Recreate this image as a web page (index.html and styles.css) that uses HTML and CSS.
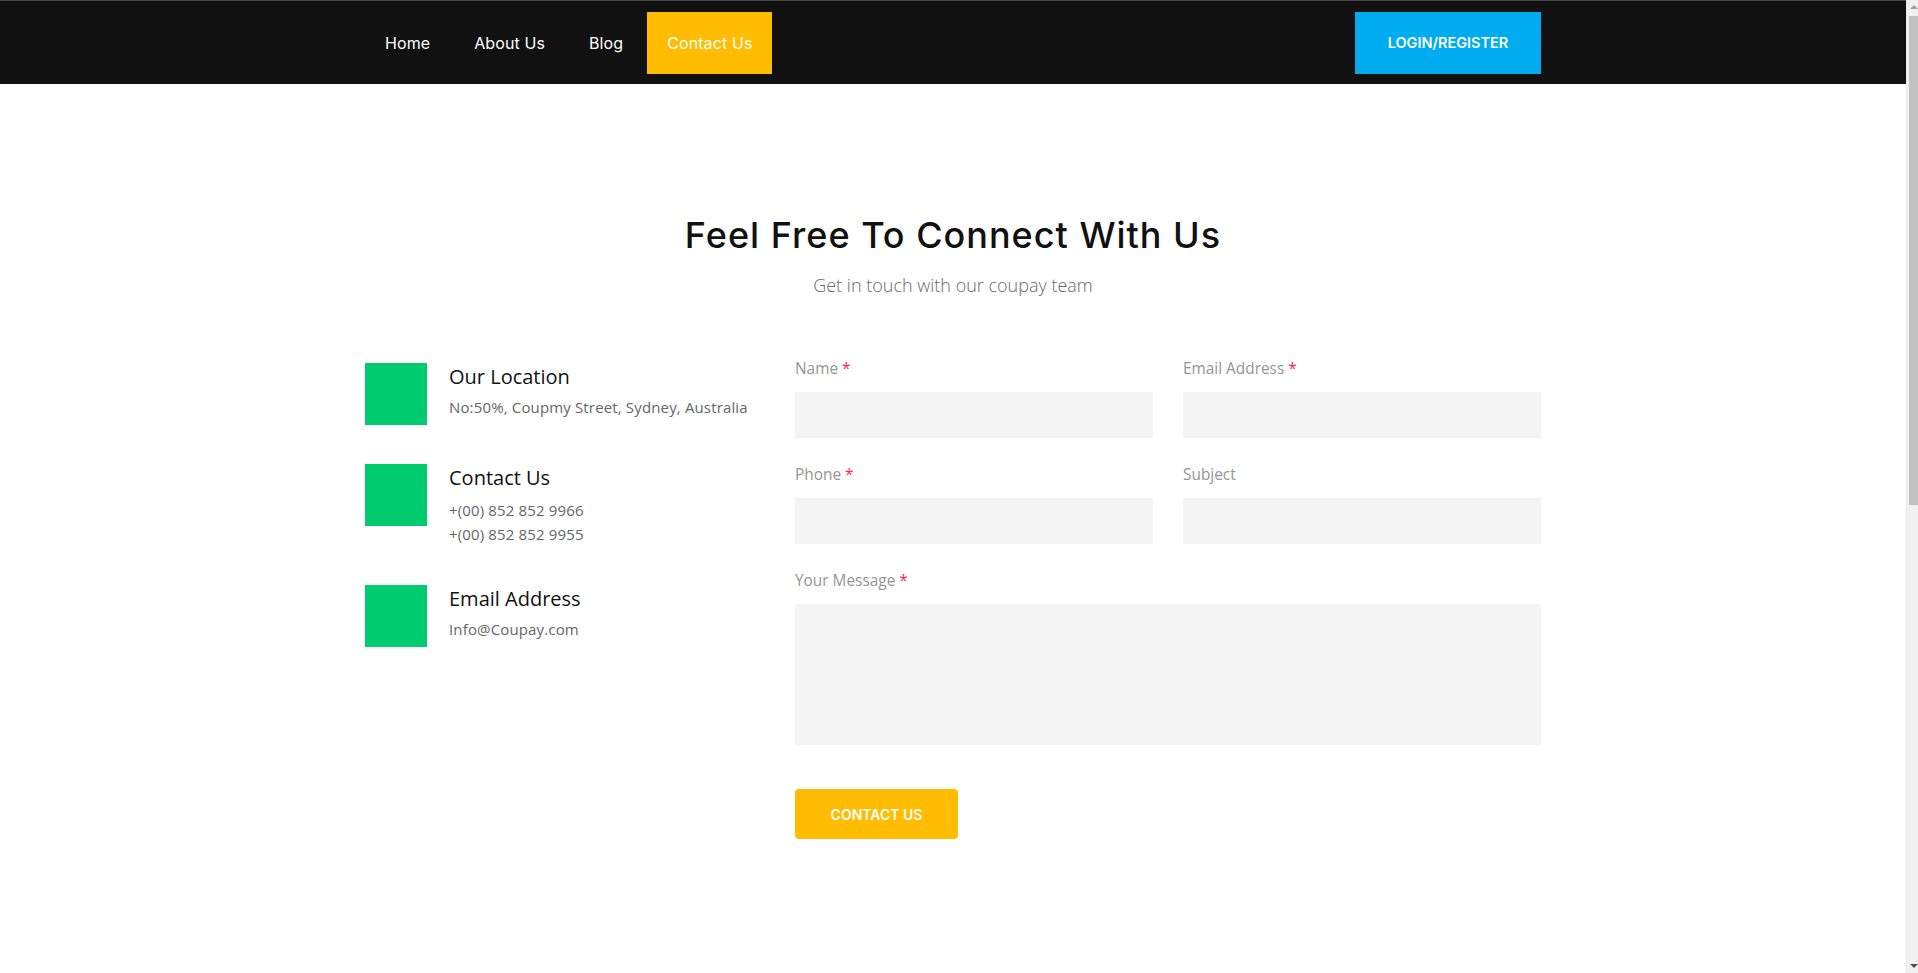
FILE: index.html
```html
<!DOCTYPE html>
<html lang="en">
<head>
<meta charset="utf-8">
<title>Contact Us - Coupay</title>
<link rel="stylesheet" href="styles.css">
</head>
<body>
<header class="topbar">
  <div class="container topbar-inner">
    <nav class="nav">
      <a class="nav-link" href="#">Home</a>
      <a class="nav-link" href="#">About Us</a>
      <a class="nav-link" href="#">Blog</a>
      <a class="nav-link active" href="#">Contact Us</a>
    </nav>
    <a class="login-btn" href="#">LOGIN/REGISTER</a>
  </div>
</header>

<main class="contact">
  <div class="container">
    <h1 class="contact-title">Feel Free To Connect With Us</h1>
    <p class="contact-sub">Get in touch with our coupay team</p>

    <div class="contact-grid">
      <div class="info-list">
        <div class="info-item">
          <div class="info-icon"></div>
          <div class="info-body">
            <h3 class="info-title">Our Location</h3>
            <p class="info-text">No:50%, Coupmy Street, Sydney, Australia</p>
          </div>
        </div>
        <div class="info-item">
          <div class="info-icon"></div>
          <div class="info-body">
            <h3 class="info-title">Contact Us</h3>
            <p class="info-text info-text-multi">+(00) 852 852 9966<br>+(00) 852 852 9955</p>
          </div>
        </div>
        <div class="info-item">
          <div class="info-icon"></div>
          <div class="info-body">
            <h3 class="info-title">Email Address</h3>
            <p class="info-text">Info@Coupay.com</p>
          </div>
        </div>
      </div>

      <form class="contact-form">
        <div class="field">
          <label class="field-label">Name <span class="req">*</span></label>
          <input class="field-input" type="text">
        </div>
        <div class="field">
          <label class="field-label">Email Address <span class="req">*</span></label>
          <input class="field-input" type="email">
        </div>
        <div class="field">
          <label class="field-label">Phone <span class="req">*</span></label>
          <input class="field-input" type="text">
        </div>
        <div class="field">
          <label class="field-label">Subject</label>
          <input class="field-input" type="text">
        </div>
        <div class="field field-wide">
          <label class="field-label">Your Message <span class="req">*</span></label>
          <textarea class="field-input field-textarea"></textarea>
        </div>
        <div class="field-wide">
          <button class="submit-btn" type="button">CONTACT US</button>
        </div>
      </form>
    </div>
  </div>
</main>

<div class="scrollbar" aria-hidden="true">
  <span class="sb-arrow sb-up"></span>
  <span class="sb-thumb"></span>
  <span class="sb-arrow sb-down"></span>
</div>
</body>
</html>
```

FILE: styles.css
```css
* {
  box-sizing: border-box;
}

html, body {
  margin: 0;
  padding: 0;
}

body {
  font-family: "Open Sans", "Noto Sans", sans-serif;
  color: #111;
  background: #fff;
  padding-right: 12px;
}

.container {
  width: 1176px;
  margin: 0 auto;
}

/* Header */
.topbar {
  background: #111111;
  border-top: 1px solid #454545;
  margin-right: -12px;
  padding-right: 12px;
}

.topbar-inner {
  height: 83px;
  display: flex;
  align-items: center;
  justify-content: space-between;
}

.nav {
  display: flex;
  align-items: center;
  gap: 4px;
}

.nav-link {
  display: flex;
  align-items: center;
  height: 62px;
  padding: 0 20px;
  font-family: Inter, "Liberation Sans", sans-serif;
  font-weight: 400;
  font-size: 16px;
  letter-spacing: 0.1px;
  color: #fff;
  text-decoration: none;
}

.nav-link.active {
  background: #ffbc00;
}

.login-btn {
  display: flex;
  align-items: center;
  justify-content: center;
  width: 186px;
  height: 62px;
  background: #00acf0;
  color: #fff;
  font-family: Inter, "Liberation Sans", sans-serif;
  font-weight: 600;
  font-size: 14.5px;
  text-decoration: none;
}

/* Contact section */
.contact {
  padding-top: 130px;
  min-height: 1900px;
}

.contact-title {
  margin: 0;
  text-align: center;
  font-family: Inter, "Liberation Sans", sans-serif;
  font-weight: 500;
  font-size: 36px;
  letter-spacing: 1px;
  line-height: 43px;
  color: #111;
}

.contact-sub {
  margin: 15px 0 0;
  text-align: center;
  font-weight: 300;
  font-size: 18px;
  line-height: 27px;
  color: #6a6a6a;
}

.contact-grid {
  margin-top: 58px;
  display: grid;
  grid-template-columns: 400px 1fr;
  column-gap: 30px;
}

/* Info list */
.info-list {
  padding-top: 6px;
}

.info-item {
  display: flex;
  align-items: flex-start;
  gap: 22px;
  margin-bottom: 39px;
}

.info-icon {
  width: 62px;
  height: 62px;
  flex: none;
  background: #00cc6f;
}

.info-title {
  margin: 0;
  font-weight: 400;
  font-size: 20px;
  line-height: 28px;
  color: #111;
}

.info-text {
  margin: 4px 0 0;
  font-size: 15px;
  letter-spacing: 0.15px;
  line-height: 24px;
  color: #666;
}

.info-text-multi {
  margin-top: 6px;
}

/* Form */
.contact-form {
  display: grid;
  grid-template-columns: 1fr 1fr;
  column-gap: 30px;
  row-gap: 25px;
}

.field {
  display: flex;
  flex-direction: column;
}

.field-wide {
  grid-column: 1 / -1;
}

.field-label {
  font-size: 15.4px;
  line-height: 24px;
  color: #959595;
  margin-bottom: 11px;
}

.req {
  color: #ff1f5a;
}

.field-input {
  height: 46px;
  border: none;
  outline: none;
  background: #f4f4f4;
  font-family: "Open Sans", sans-serif;
  font-size: 15px;
  padding: 0 15px;
}

.field-textarea {
  height: 141px;
  resize: none;
  padding: 12px 15px;
}

.submit-btn {
  margin-top: 19px;
  width: 163px;
  height: 50px;
  border: none;
  border-radius: 4px;
  background: #ffbc00;
  color: #fff;
  font-family: Inter, "Liberation Sans", sans-serif;
  font-weight: 600;
  font-size: 14px;
  cursor: pointer;
}

/* Window scrollbar (as seen in the screenshot) */
.scrollbar {
  position: fixed;
  top: 0;
  right: 0;
  width: 12px;
  height: 100vh;
  background: #f1f1f1;
  border-left: 1px solid #e8e8e8;
}

.sb-thumb {
  position: absolute;
  top: 16px;
  left: 2px;
  right: 0;
  height: 489px;
  background: #c1c1c1;
}

.sb-arrow {
  position: absolute;
  left: 3px;
  width: 0;
  height: 0;
  border-left: 4px solid transparent;
  border-right: 4px solid transparent;
}

.sb-up {
  top: 5px;
  border-bottom: 4px solid #a3a3a3;
}

.sb-down {
  bottom: 5px;
  border-top: 4px solid #505050;
}
```
